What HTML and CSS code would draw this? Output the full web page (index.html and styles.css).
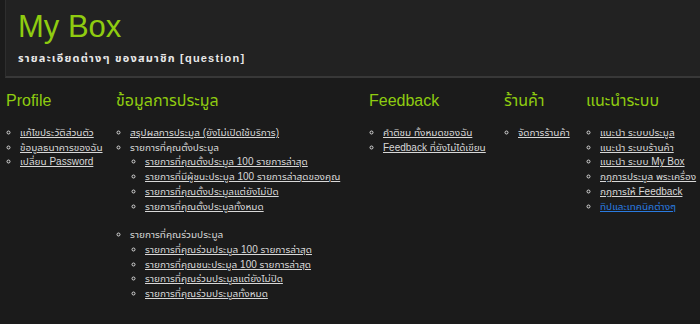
FILE: index.html
```html
<!DOCTYPE html>
<html>
<head>
    <title>My Box</title>
    <link rel="stylesheet" href="styles.css">
</head>
<body>
    <div class="header">
        <h1>My Box</h1>
        <div class="subtitle">รายละเอียดต่างๆ ของสมาชิก [question]</div>
    </div>

    <div class="menu">
        <div class="col col-profile">
            <h2>Profile</h2>
            <ul>
                <li><a href="#">แก้ไขประวัติส่วนตัว</a></li>
                <li><a href="#">ข้อมูลธนาคารของฉัน</a></li>
                <li><a href="#">เปลี่ยน Password</a></li>
            </ul>
        </div>
        <div class="col col-auction">
            <h2>ข้อมูลการประมูล</h2>
            <ul>
                <li><a href="#">สรุปผลการประมูล (ยังไม่เปิดใช้บริการ)</a></li>
                <li><span>รายการที่คุณตั้งประมูล</span>
                    <ul>
                        <li><a href="#">รายการที่คุณตั้งประมูล 100 รายการล่าสุด</a></li>
                        <li><a href="#">รายการที่มีผู้ชนะประมูล 100 รายการล่าสุดของคุณ</a></li>
                        <li><a href="#">รายการที่คุณตั้งประมูลแต่ยังไม่ปิด</a></li>
                        <li><a href="#">รายการที่คุณตั้งประมูลทั้งหมด</a></li>
                    </ul>
                </li>
                <li class="spaced"><span>รายการที่คุณร่วมประมูล</span>
                    <ul>
                        <li><a href="#">รายการที่คุณร่วมประมูล 100 รายการล่าสุด</a></li>
                        <li><a href="#">รายการที่คุณชนะประมูล 100 รายการล่าสุด</a></li>
                        <li><a href="#">รายการที่คุณร่วมประมูลแต่ยังไม่ปิด</a></li>
                        <li><a href="#">รายการที่คุณร่วมประมูลทั้งหมด</a></li>
                    </ul>
                </li>
            </ul>
        </div>
        <div class="col col-feedback">
            <h2>Feedback</h2>
            <ul>
                <li><a href="#">คำติชม ทั้งหมดของฉัน</a></li>
                <li><a href="#">Feedback ที่ยังไม่ได้เขียน</a></li>
            </ul>
        </div>
        <div class="col col-shop">
            <h2>ร้านค้า</h2>
            <ul>
                <li><a href="#">จัดการร้านค้า</a></li>
            </ul>
        </div>
        <div class="col col-guide">
            <h2>แนะนำระบบ</h2>
            <ul>
                <li><a href="#">แนะนำ ระบบประมูล</a></li>
                <li><a href="#">แนะนำ ระบบร้านค้า</a></li>
                <li><a href="#">แนะนำ ระบบ My Box</a></li>
                <li><a href="#">กฎการประมูล พระเครื่อง</a></li>
                <li><a href="#">กฎการให้ Feedback</a></li>
                <li><a href="#" class="active">ทิปและเทคนิคต่างๆ</a></li>
            </ul>
        </div>
    </div>
</body>
</html>
```

FILE: styles.css
```css
body {
    margin: 0;
    padding: 0;
    background-color: #1b1b1b;
    color: #d8d8d8;
    font-family: "Liberation Sans", "Noto Sans Thai UI", Arial, sans-serif;
    font-size: 10px;
}

/* Header box */
.header {
    margin-left: 5px;
    height: 76px;
    padding: 0 12px;
    background-color: #222222;
    border-left: 1px solid #2e2e2e;
    border-bottom: 2px solid #383838;
}

.header h1 {
    margin: 0;
    padding-top: 9px;
    font-weight: normal;
    font-size: 31px;
    line-height: 36px;
    color: #8fcc10;
}

.subtitle {
    margin-top: 5px;
    font-size: 11px;
    font-weight: bold;
    letter-spacing: 1.2px;
    color: #e8e8e8;
}

/* Menu columns */
.menu {
    display: flex;
    padding-left: 5px;
    white-space: nowrap;
}

.col {
    flex-shrink: 0;
}

.col h2 {
    margin: 12px 0 0 1px;
    font-weight: normal;
    font-size: 16px;
    line-height: 22px;
    color: #8fcc10;
}

.col-profile { width: 110px; }
.col-auction { width: 253px; }
.col-feedback { width: 135px; }
.col-shop { width: 82px; }

ul {
    list-style-type: circle;
    margin: 0;
    padding-left: 15px;
}

.col > ul {
    margin-top: 14px;
}

li {
    line-height: 14.7px;
}

/* keep every row the same height, whatever font the Thai text falls back to */
li > a,
li > span {
    display: inline-block;
    height: 14.7px;
    vertical-align: top;
}

li.spaced {
    margin-top: 14px;
}

a {
    color: #d8d8d8;
    text-decoration: underline;
}

a.active {
    color: #2a7be0;
}
```
